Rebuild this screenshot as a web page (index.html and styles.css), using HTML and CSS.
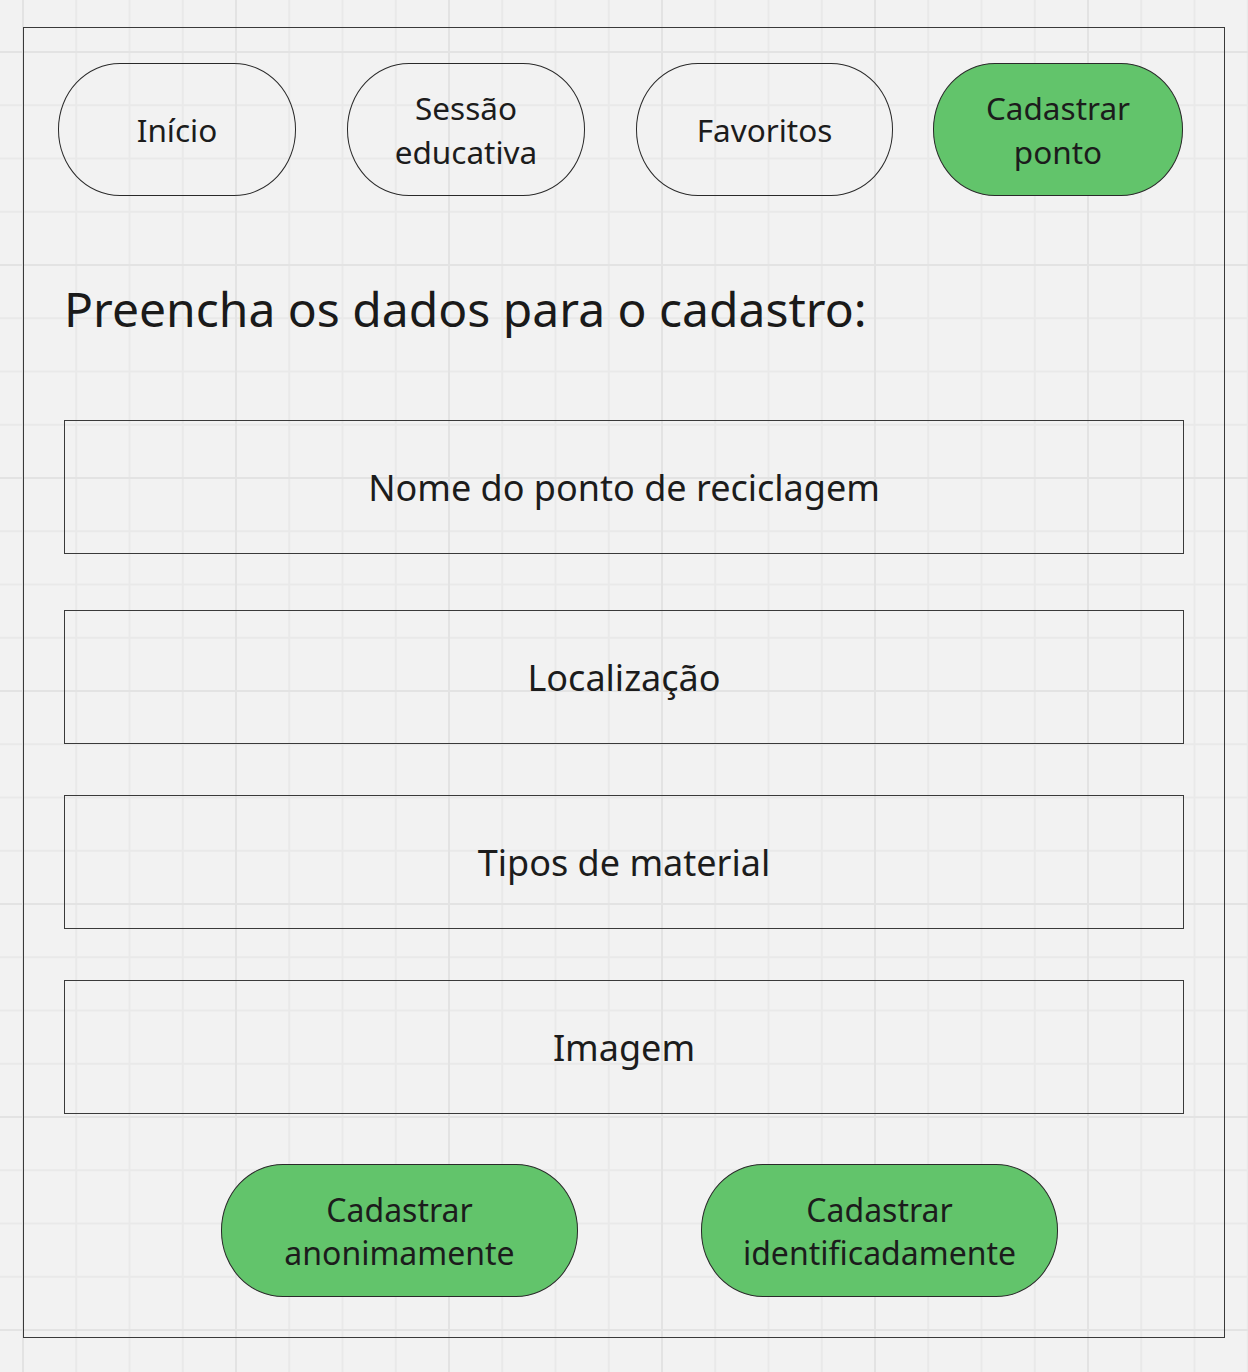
FILE: index.html
```html
<!DOCTYPE html>
<html lang="pt-BR">
<head>
<meta charset="utf-8">
<title>Cadastrar ponto</title>
<link rel="stylesheet" href="styles.css">
</head>
<body>
<div class="frame">
  <nav class="nav">
    <div class="pill nav-inicio">Início</div>
    <div class="pill nav-sessao">Sessão<br>educativa</div>
    <div class="pill nav-fav">Favoritos</div>
    <div class="pill pill-green nav-cad">Cadastrar<br>ponto</div>
  </nav>
  <h1 class="title">Preencha os dados para o cadastro:</h1>
  <div class="fields">
    <div class="field">Nome do ponto de reciclagem</div>
    <div class="field f2">Localização</div>
    <div class="field f3">Tipos de material</div>
    <div class="field f3">Imagem</div>
  </div>
  <div class="actions">
    <div class="pill pill-green act">Cadastrar<br>anonimamente</div>
    <div class="pill pill-green act act2">Cadastrar<br>identificadamente</div>
  </div>
</div>
</body>
</html>
```
FILE: styles.css
```css
html, body {
  margin: 0;
  padding: 0;
}
body {
  width: 1248px;
  height: 1372px;
  overflow: hidden;
  font-family: "Noto Sans", "Open Sans", sans-serif;
  color: #1c1c1c;
  background-color: #f2f2f2;
  background-image:
    linear-gradient(to right, #e3e3e3 0, #e3e3e3 2px, transparent 2px),
    linear-gradient(to bottom, #e3e3e3 0, #e3e3e3 2px, transparent 2px),
    linear-gradient(to right, #e9e9e9 0, #e9e9e9 2px, transparent 2px),
    linear-gradient(to bottom, #e9e9e9 0, #e9e9e9 2px, transparent 2px);
  background-size: 213px 100%, 100% 213px, 53.25px 100%, 100% 53.25px;
  background-position: 22px 0, 0 264px, 22px 0, 0 51px;
}
.frame {
  box-sizing: border-box;
  margin: 27px 0 0 23px;
  width: 1202px;
  height: 1311px;
  border: 1px solid #3a3a3a;
}
.nav {
  display: flex;
  padding: 35px 0 0 34px;
}
.pill {
  box-sizing: border-box;
  height: 133px;
  border: 1px solid #2a2a2a;
  border-radius: 62px / 66px;
  display: flex;
  align-items: center;
  justify-content: center;
  text-align: center;
  font-size: 31.5px;
  line-height: 44px;
}
.pill-green {
  background: #62c46b;
}
.nav-inicio { width: 238px; }
.nav-sessao { width: 238px; margin-left: 51px; }
.nav-fav { width: 257px; margin-left: 51px; }
.nav-cad { width: 250px; margin-left: 40px; }
.title {
  margin: 0;
  padding: 80px 0 0 40px;
  font-weight: 400;
  font-size: 48px;
  line-height: 66px;
  color: #1a1a1a;
}
.fields {
  display: flex;
  flex-direction: column;
  padding: 0 0 0 40px;
  margin-top: 78px;
}
.field {
  box-sizing: border-box;
  width: 1120px;
  height: 134px;
  border: 1px solid #3a3a3a;
  display: flex;
  align-items: center;
  justify-content: center;
  font-size: 36px;
  color: #1c1c1c;
}
.f2 { margin-top: 56px; }
.f3 { margin-top: 51px; }
.actions {
  display: flex;
  padding-left: 197px;
  margin-top: 50px;
}
.act {
  width: 357px;
  font-size: 32px;
  line-height: 43px;
}
.act2 { margin-left: 123px; }
```
